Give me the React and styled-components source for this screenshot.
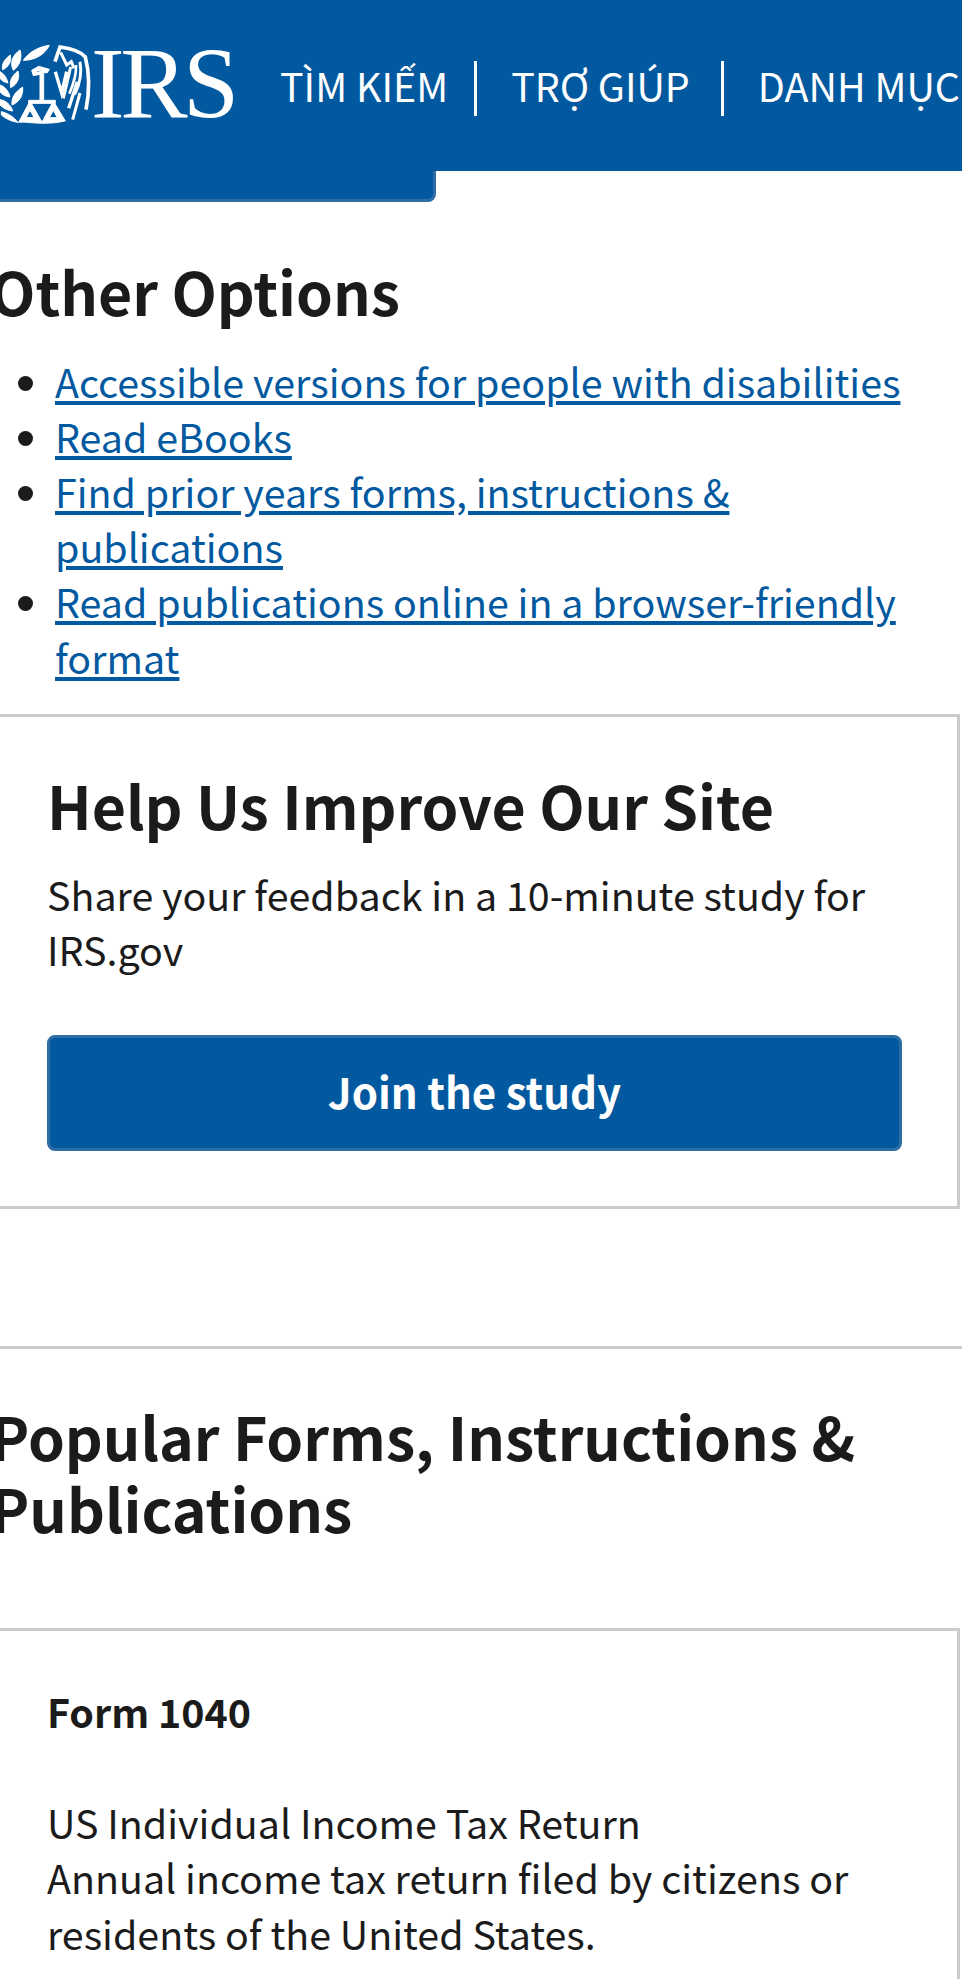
import styled, { createGlobalStyle } from 'styled-components';

const GlobalStyle = createGlobalStyle`
  html, body {
    margin: 0;
    padding: 0;
    background: #fff;
    overflow: hidden;
  }
  body {
    font-family: "Noto Sans CJK SC", "Noto Sans", sans-serif;
    color: #1b1b1b;
  }
`;

const BLUE = '#02599f';

const popularLinks = [
  'Accessible versions for people with disabilities',
  'Read eBooks',
  'Find prior years forms, instructions & publications',
  'Read publications online in a browser-friendly format',
];

function Seal() {
  return (
    <SealSvg viewBox="0 0 300 270" fill="#fff" stroke="#fff" strokeWidth="3">
      {/* laurel */}
      <path d="M70 58 C86 34 116 17 148 13 C136 38 108 58 70 58 Z" />
      <path d="M40 88 C28 65 38 42 60 27 C68 50 58 76 40 88 Z" />
      <path d="M8 86 C4 70 14 54 31 42 C35 60 27 78 8 86 Z" />
      <path d="M0 92 C12 98 20 110 24 126 C12 124 4 118 0 112 Z" />
      <path d="M32 140 C28 118 36 104 54 90 C60 112 52 130 32 140 Z" />
      <path d="M0 132 C14 136 26 150 30 168 C14 166 4 158 0 152 Z" />
      <path d="M36 192 C34 170 44 154 68 138 C70 162 60 182 36 192 Z" />
      <path d="M0 176 C16 178 32 190 38 210 C20 208 8 200 0 192 Z" />
      <path d="M4 212 C22 216 42 228 54 244 C34 242 16 232 4 222 Z" />
      {/* eagle head and post */}
      <path fillRule="evenodd" d="M95 88 L116 76 L148 85 L142 95 L131 95 L131 182 L120 182 L120 100 L100 104 Z M108 90 L114 96 L122 90 Z" />
      <path d="M86 178 H166 V187 H86 Z" />
      {/* scales */}
      <path fillRule="evenodd" d="M90 180 L124 240 L56 244 Z M90 208 L78 230 L102 229 Z" />
      <path fillRule="evenodd" d="M160 180 L196 240 L128 240 Z M160 208 L148 230 L172 230 Z" />
      <path d="M60 240 C94 248 160 250 192 240 L190 234 C150 244 94 244 62 236 Z" />
      {/* wing */}
      <g fill="none" strokeLinejoin="miter">
        <path strokeWidth="11" d="M165 62 L180 18 C212 22 242 32 256 48 C267 90 269 150 258 206" />
        <path strokeWidth="10" d="M166 92 L185 156 L200 92" />
        <path strokeWidth="9" d="M182 34 L200 72 L214 62 L222 82" />
        <path strokeWidth="9" d="M212 78 L190 172" />
        <path strokeWidth="9" d="M240 62 C246 96 238 132 224 160" />
        <path strokeWidth="8" d="M228 72 C230 100 220 130 208 158" />
        <path strokeWidth="10" d="M206 202 L232 122" />
        <path strokeWidth="9" d="M218 236 L240 156" />
      </g>
    </SealSvg>
  );
}

export default function App() {
  return (
    <Page>
      <GlobalStyle />
      <Header>
        <Logo>
          <Seal />
          <LogoWord>IRS</LogoWord>
        </Logo>
        <Nav>
          <NavItem>TÌM KIẾM</NavItem>
          <NavItem>TRỢ GIÚP</NavItem>
          <NavItem>DANH MỤC</NavItem>
        </Nav>
      </Header>
      <HiddenButton />

      <Content>
        <SectionTitle>Other Options</SectionTitle>
        <LinkList>
          {popularLinks.map(l => (
            <li key={l}><a href="#">{l}</a></li>
          ))}
        </LinkList>

        <Card>
          <CardTitle>Help Us Improve Our Site</CardTitle>
          <Body>Share your feedback in a 10-minute study for IRS.gov</Body>
          <JoinButton>Join the study</JoinButton>
        </Card>

        <Divider />

        <PopularTitle>Popular Forms, Instructions &amp; Publications</PopularTitle>

        <FormCard>
          <FormName>Form 1040</FormName>
          <Body>
            US Individual Income Tax Return<br />
            Annual income tax return filed by citizens or residents of the United States.
          </Body>
        </FormCard>
      </Content>
    </Page>
  );
}

const Page = styled.div`
  width: 962px;
  height: 1979px;
  overflow: hidden;
`;

const Header = styled.header`
  display: flex;
  align-items: center;
  height: 171px;
  background: ${BLUE};
  white-space: nowrap;
`;

const Logo = styled.div`
  display: flex;
  align-items: center;
  width: 280px;
  height: 90px;
  flex-shrink: 0;
`;

const SealSvg = styled.svg`
  width: 100px;
  height: 90px;
  flex-shrink: 0;
`;

const LogoWord = styled.span`
  font-family: "Liberation Serif", serif;
  font-size: 101px;
  line-height: 80px;
  letter-spacing: -4.5px;
  color: #fff;
  margin: -4px 0 0 -9px;
`;

const Nav = styled.nav`
  display: flex;
  align-items: center;
  margin-top: 6px;
`;

const NavItem = styled.div`
  font-size: 39.4px;
  line-height: 48px;
  color: #fff;
  padding: 0 31px 7px 34px;
  border-left: 3px solid #fff;
  &:first-child {
    padding: 0 26px 7px 0;
    border-left: 0;
  }
`;

const HiddenButton = styled.div`
  width: 436px;
  height: 31px;
  box-sizing: border-box;
  background: ${BLUE};
  border-bottom: 3px solid #2f6ea4;
  border-right: 3px solid #2f6ea4;
  border-bottom-right-radius: 8px;
`;

const Content = styled.main`
  margin-left: -13px;
  width: 975px;
`;

const SectionTitle = styled.h2`
  margin: 53.5px 0 0 3px;
  font-size: 59px;
  line-height: 70px;
  font-weight: 700;
`;

const LinkList = styled.ul`
  margin: 27px 0 0;
  padding: 0 0 0 68px;
  list-style: disc;
  font-size: 39.4px;
  line-height: 55.2px;
  width: 850px;
  a {
    color: ${BLUE};
    text-decoration: underline;
    text-decoration-thickness: 3.5px;
    text-underline-offset: 3px;
  }
  li::marker {
    color: #1b1b1b;
  }
`;

const Card = styled.section`
  box-sizing: border-box;
  width: 973px;
  height: 495px;
  margin-top: 30.7px;
  padding: 52.5px 55px 0 57px;
  border: 3px solid #ccc;
`;

const CardTitle = styled.h3`
  margin: 0 0 26px;
  font-size: 59px;
  line-height: 70px;
  font-weight: 700;
`;

const Body = styled.p`
  margin: 0;
  font-size: 39.4px;
  line-height: 55.2px;
`;

const JoinButton = styled.button`
  display: block;
  width: 100%;
  height: 116px;
  margin-top: 59px;
  padding: 0 0 5px;
  background: ${BLUE};
  border: 3px solid #2f6ea4;
  border-radius: 8px;
  color: #fff;
  font: 700 42px "Noto Sans CJK SC", "Noto Sans", sans-serif;
`;

const Divider = styled.hr`
  margin: 137px 0 0;
  border: 0;
  border-top: 3px solid #ccc;
`;

const PopularTitle = styled.h2`
  margin: 50.5px 0 0 3px;
  font-size: 59px;
  line-height: 72px;
  font-weight: 700;
  width: 930px;
`;

const FormCard = styled.section`
  box-sizing: border-box;
  width: 973px;
  margin-top: 84.5px;
  padding: 52px 55px 40px 57px;
  border: 3px solid #ccc;
`;

const FormName = styled.p`
  margin: 0 0 55.5px;
  font-size: 39.4px;
  line-height: 55.2px;
  font-weight: 700;
`;
